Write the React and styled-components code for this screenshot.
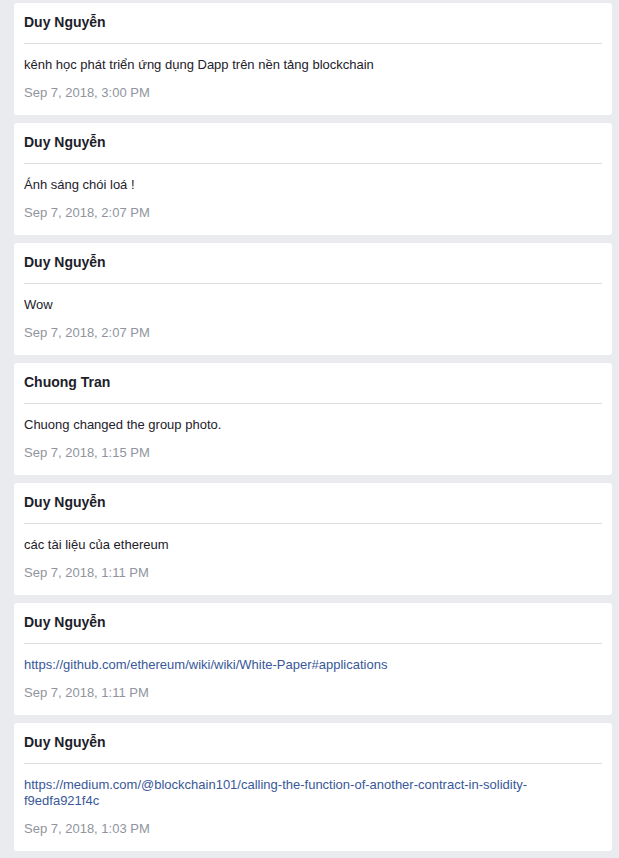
import React from 'react';
import styled, { createGlobalStyle } from 'styled-components';

const GlobalStyle = createGlobalStyle`
    body {
        margin: 0;
        background: #e9ebee;
        font-family: "Liberation Sans", Arial, Helvetica, sans-serif;
        color: #1d2129;
    }
`;

const Feed = styled.div`
    display: flex;
    flex-direction: column;
    gap: 8px;
    padding: 3px 7px 8px 14px;
`;

const Card = styled.div`
    background: #fff;
    border-radius: 3px;
    padding: 10px 10px 14px;
`;

const Author = styled.div`
    font-size: 14px;
    font-weight: bold;
    line-height: 18px;
    padding-bottom: 12px;
    border-bottom: 1px solid #dddfe2;
`;

const Message = styled.div`
    margin-top: 13px;
    font-size: 13px;
    line-height: 16px;
    color: ${props => props.$link ? "#385898" : "#1d2129"};
`;

const Time = styled.div`
    margin-top: 12px;
    font-size: 13px;
    line-height: 16px;
    color: #90949c;
`;

const posts = [
    { name: "Duy Nguyễn", text: "kênh học phát triển ứng dụng Dapp trên nền tảng blockchain", time: "Sep 7, 2018, 3:00 PM" },
    { name: "Duy Nguyễn", text: "Ánh sáng chói loá !", time: "Sep 7, 2018, 2:07 PM" },
    { name: "Duy Nguyễn", text: "Wow", time: "Sep 7, 2018, 2:07 PM" },
    { name: "Chuong Tran", text: "Chuong changed the group photo.", time: "Sep 7, 2018, 1:15 PM" },
    { name: "Duy Nguyễn", text: "các tài liệu của ethereum", time: "Sep 7, 2018, 1:11 PM" },
    { name: "Duy Nguyễn", text: "https://github.com/ethereum/wiki/wiki/White-Paper#applications", link: true, time: "Sep 7, 2018, 1:11 PM" },
    { name: "Duy Nguyễn", text: "https://medium.com/@blockchain101/calling-the-function-of-another-contract-in-solidity-f9edfa921f4c", link: true, time: "Sep 7, 2018, 1:03 PM" },
];

const App = () => {
    return (
        <>
            <GlobalStyle />
            <Feed>
                {posts.map((p, i) => (
                    <Card key={i}>
                        <Author>{p.name}</Author>
                        <Message $link={p.link}>{p.text}</Message>
                        <Time>{p.time}</Time>
                    </Card>
                ))}
            </Feed>
        </>
    );
};

export default App;
